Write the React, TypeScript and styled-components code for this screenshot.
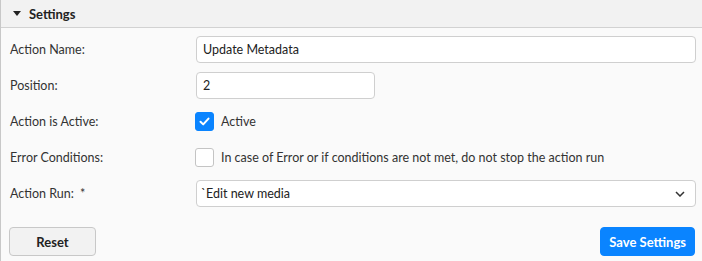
import styled, { createGlobalStyle } from "styled-components";

const GlobalStyle = createGlobalStyle`
  html, body {
    margin: 0;
    padding: 0;
    background: #fafafa;
  }
  body {
    font-family: "Lato", "Noto Sans", sans-serif;
    font-size: 12.5px;
    color: #333;
  }
`;

interface CheckProps {
  checked?: boolean;
}

const Panel = styled.section`
  width: 702px;
  height: 261px;
  box-sizing: border-box;
  border-left: 1px solid #c8c8c8;
  background: #fafafa;
  overflow: hidden;
`;

const PanelHeader = styled.div`
  display: flex;
  align-items: center;
  column-gap: 8px;
  height: 27px;
  padding-left: 12px;
  background: #f2f2f2;
  border-bottom: 1px solid #d2d2d2;
  font-weight: 700;
  font-size: 13px;
  color: #222;
`;

const Caret = styled.span`
  display: block;
  width: 0;
  height: 0;
  border-left: 4px solid transparent;
  border-right: 4px solid transparent;
  border-top: 5px solid #222;
`;

const PanelBody = styled.div`
  display: flex;
  flex-direction: column;
  padding: 8px 6px 0 8px;
`;

const Form = styled.div`
  display: grid;
  grid-template-columns: 187px 1fr;
  grid-auto-rows: 27px;
  row-gap: 9px;
  align-items: center;
`;

const Label = styled.label`
  padding-left: 1px;
  color: #333;
`;

const Required = styled.span`
  margin-left: 6px;
`;

const TextField = styled.input<{ narrow?: boolean }>`
  box-sizing: border-box;
  width: ${(p) => (p.narrow ? "179px" : "100%")};
  height: 27px;
  padding: 0 6px;
  font: inherit;
  color: #222;
  background: #fff;
  border: 1px solid #cfcfcf;
  border-radius: 4px;
  outline: none;
`;

const CheckRow = styled.label`
  display: flex;
  align-items: center;
  column-gap: 7px;
  margin-left: -1px;
`;

const CheckBox = styled.span<CheckProps>`
  display: flex;
  align-items: center;
  justify-content: center;
  box-sizing: border-box;
  width: 19px;
  height: 19px;
  border-radius: 3px;
  background: ${(p) => (p.checked ? "#0a84ff" : "#fff")};
  border: 1px solid ${(p) => (p.checked ? "#0a84ff" : "#c4c4c4")};
`;

const SelectBox = styled.div`
  display: flex;
  align-items: center;
  justify-content: space-between;
  box-sizing: border-box;
  height: 27px;
  padding: 0 10px 0 4px;
  background: #fff;
  border: 1px solid #cfcfcf;
  border-radius: 4px;
  color: #222;
`;

const Footer = styled.div`
  display: flex;
  justify-content: space-between;
  margin-top: 20px;
  padding-right: 1px;
`;

const Button = styled.button<{ primary?: boolean }>`
  height: 29px;
  padding: 0 ${(p) => (p.primary ? "8px" : "0")};
  width: ${(p) => (p.primary ? "auto" : "87px")};
  font-family: inherit;
  font-size: 13px;
  font-weight: 700;
  border-radius: 4px;
  color: ${(p) => (p.primary ? "#fff" : "#222")};
  background: ${(p) => (p.primary ? "#0a84ff" : "#f2f2f2")};
  border: 1px solid ${(p) => (p.primary ? "#0a84ff" : "#c8c8c8")};
`;

export default function App() {
  return (
    <>
      <GlobalStyle />
      <Panel>
        <PanelHeader>
          <Caret />
          Settings
        </PanelHeader>
        <PanelBody>
          <Form>
            <Label>Action Name:</Label>
            <TextField defaultValue="Update Metadata" />

            <Label>Position:</Label>
            <TextField narrow defaultValue="2" />

            <Label>Action is Active:</Label>
            <CheckRow>
              <CheckBox checked>
                <svg width="13" height="13" viewBox="0 0 13 13">
                  <path d="M2.5 6.8 L5.2 9.4 L10.5 3.6" fill="none" stroke="#fff" strokeWidth="2" strokeLinecap="round" strokeLinejoin="round" />
                </svg>
              </CheckBox>
              Active
            </CheckRow>

            <Label>Error Conditions:</Label>
            <CheckRow>
              <CheckBox />
              In case of Error or if conditions are not met, do not stop the action run
            </CheckRow>

            <Label>
              Action Run:<Required>*</Required>
            </Label>
            <SelectBox>
              <span>`Edit new media</span>
              <svg width="10" height="6" viewBox="0 0 10 6">
                <path d="M1 1 L5 5 L9 1" fill="none" stroke="#333" strokeWidth="1.5" />
              </svg>
            </SelectBox>
          </Form>
          <Footer>
            <Button>Reset</Button>
            <Button primary>Save Settings</Button>
          </Footer>
        </PanelBody>
      </Panel>
    </>
  );
}
